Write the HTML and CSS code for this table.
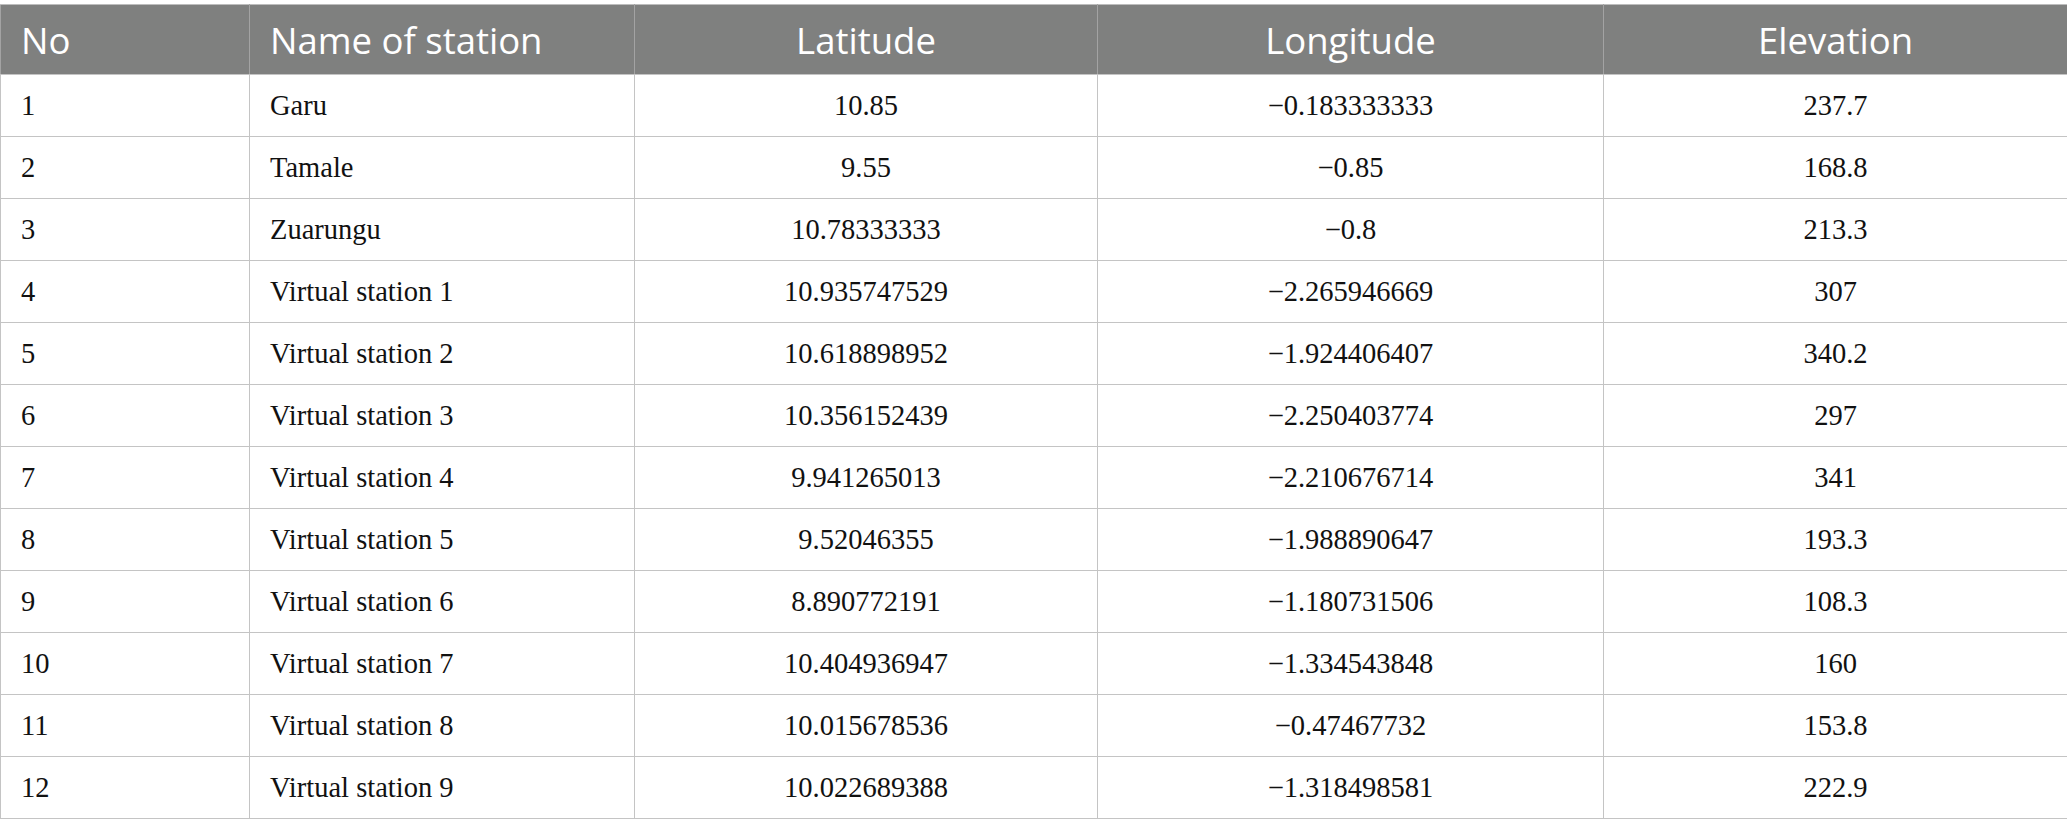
FILE: index.html
```html
<!DOCTYPE html>
<html lang="en">
<head>
<meta charset="utf-8">
<title>Stations</title>
<link rel="stylesheet" href="styles.css">
</head>
<body>
<div class="wrap">
<table class="stations">
  <colgroup>
    <col class="c-no">
    <col class="c-name">
    <col class="c-lat">
    <col class="c-lon">
    <col class="c-elev">
  </colgroup>
  <thead>
    <tr>
      <th class="left">No</th>
      <th class="left">Name of station</th>
      <th>Latitude</th>
      <th>Longitude</th>
      <th>Elevation</th>
    </tr>
  </thead>
  <tbody>
    <tr><td class="left">1</td><td class="left">Garu</td><td>10.85</td><td>−0.183333333</td><td>237.7</td></tr>
    <tr><td class="left">2</td><td class="left">Tamale</td><td>9.55</td><td>−0.85</td><td>168.8</td></tr>
    <tr><td class="left">3</td><td class="left">Zuarungu</td><td>10.78333333</td><td>−0.8</td><td>213.3</td></tr>
    <tr><td class="left">4</td><td class="left">Virtual station 1</td><td>10.935747529</td><td>−2.265946669</td><td>307</td></tr>
    <tr><td class="left">5</td><td class="left">Virtual station 2</td><td>10.618898952</td><td>−1.924406407</td><td>340.2</td></tr>
    <tr><td class="left">6</td><td class="left">Virtual station 3</td><td>10.356152439</td><td>−2.250403774</td><td>297</td></tr>
    <tr><td class="left">7</td><td class="left">Virtual station 4</td><td>9.941265013</td><td>−2.210676714</td><td>341</td></tr>
    <tr><td class="left">8</td><td class="left">Virtual station 5</td><td>9.52046355</td><td>−1.988890647</td><td>193.3</td></tr>
    <tr><td class="left">9</td><td class="left">Virtual station 6</td><td>8.890772191</td><td>−1.180731506</td><td>108.3</td></tr>
    <tr><td class="left">10</td><td class="left">Virtual station 7</td><td>10.404936947</td><td>−1.334543848</td><td>160</td></tr>
    <tr><td class="left">11</td><td class="left">Virtual station 8</td><td>10.015678536</td><td>−0.47467732</td><td>153.8</td></tr>
    <tr><td class="left">12</td><td class="left">Virtual station 9</td><td>10.022689388</td><td>−1.318498581</td><td>222.9</td></tr>
  </tbody>
</table>
</div>
</body>
</html>
```

FILE: styles.css
```css
html, body {
  margin: 0;
  padding: 0;
  background: #ffffff;
}

.wrap {
  padding-top: 4px;
}

.stations {
  width: 2067px;
  border-collapse: collapse;
  table-layout: fixed;
}

.c-no { width: 249px; }
.c-name { width: 385px; }
.c-lat { width: 463px; }
.c-lon { width: 506px; }
.c-elev { width: 464px; }

.stations th {
  background: #7f807f;
  color: #ffffff;
  font-family: "Open Sans", "Noto Sans", sans-serif;
  font-weight: 400;
  font-size: 36.5px;
  height: 69px;
  padding: 0 20px;
  text-align: center;
  vertical-align: middle;
  border: 1px solid #a3a3a3;
  border-bottom-color: #c4c4c4;
  border-top-color: #bdbdbd;
}

.stations td {
  font-family: "Liberation Serif", "Times New Roman", serif;
  font-size: 28.5px;
  color: #111111;
  height: 61px;
  padding: 0 20px;
  text-align: center;
  vertical-align: middle;
  border: 1px solid #c4c4c4;
}

.stations .left {
  text-align: left;
}
```
